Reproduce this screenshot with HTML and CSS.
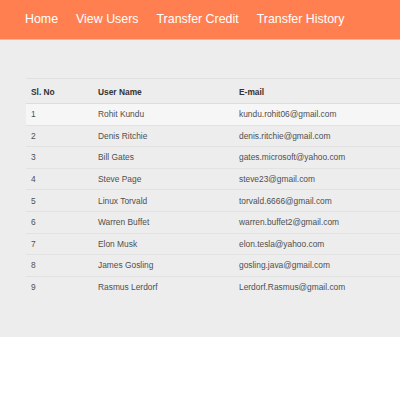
FILE: index.html
```html
<!DOCTYPE html>
<html>
<head>
<meta charset="utf-8">
<link rel="stylesheet" href="styles.css">
</head>
<body>
<nav class="nav">
  <a class="nav-link">Home</a>
  <a class="nav-link">View Users</a>
  <a class="nav-link">Transfer Credit</a>
  <a class="nav-link">Transfer History</a>
</nav>
<main class="content">
  <table class="users">
    <thead>
      <tr><th class="c1">Sl. No</th><th class="c2">User Name</th><th class="c3">E-mail</th></tr>
    </thead>
    <tbody>
      <tr><td>1</td><td>Rohit Kundu</td><td>kundu.rohit06@gmail.com</td></tr>
      <tr><td>2</td><td>Denis Ritchie</td><td>denis.ritchie@gmail.com</td></tr>
      <tr><td>3</td><td>Bill Gates</td><td>gates.microsoft@yahoo.com</td></tr>
      <tr><td>4</td><td>Steve Page</td><td>steve23@gmail.com</td></tr>
      <tr><td>5</td><td>Linux Torvald</td><td>torvald.6666@gmail.com</td></tr>
      <tr><td>6</td><td>Warren Buffet</td><td>warren.buffet2@gmail.com</td></tr>
      <tr><td>7</td><td>Elon Musk</td><td>elon.tesla@yahoo.com</td></tr>
      <tr><td>8</td><td>James Gosling</td><td>gosling.java@gmail.com</td></tr>
      <tr><td>9</td><td>Rasmus Lerdorf</td><td>Lerdorf.Rasmus@gmail.com</td></tr>
    </tbody>
  </table>
</main>
</body>
</html>
```
FILE: styles.css
```css
html, body {
  margin: 0;
  padding: 0;
  background: #ffffff;
  font-family: "Liberation Sans", Arial, sans-serif;
  overflow: hidden;
}
.nav {
  background: #ff7f50;
  height: 39px;
  display: flex;
  align-items: center;
  padding-left: 25px;
  gap: 18px;
  border-bottom: 1px solid #f7b49a;
}
.nav-link {
  color: #ffffff;
  font-size: 12.4px;
  line-height: 1;
}
.content {
  background: #ededed;
  height: 297px;
  padding: 38px 0 0 26px;
  box-sizing: border-box;
  overflow: hidden;
}
.users {
  width: 420px;
  border-collapse: collapse;
  font-size: 8.4px;
  color: #4f4f4f;
  border-top: 1px solid #e0e0e0;
}
.users th {
  text-align: left;
  font-weight: bold;
  color: #333333;
  height: 23px;
  padding: 1px 5px 0;
  border-bottom: 1px solid #dddddd;
}
.users td {
  height: 20.6px;
  padding: 0 5px;
  border-bottom: 1px solid #e2e2e2;
}
.users tbody tr:last-child td {
  border-bottom: none;
}
.users tbody tr:nth-child(odd) td {
  background: #ededed;
}
.users tbody tr:first-child td {
  background: #f6f6f6;
}
.c1 { width: 57px; }
.c2 { width: 131px; }
```
